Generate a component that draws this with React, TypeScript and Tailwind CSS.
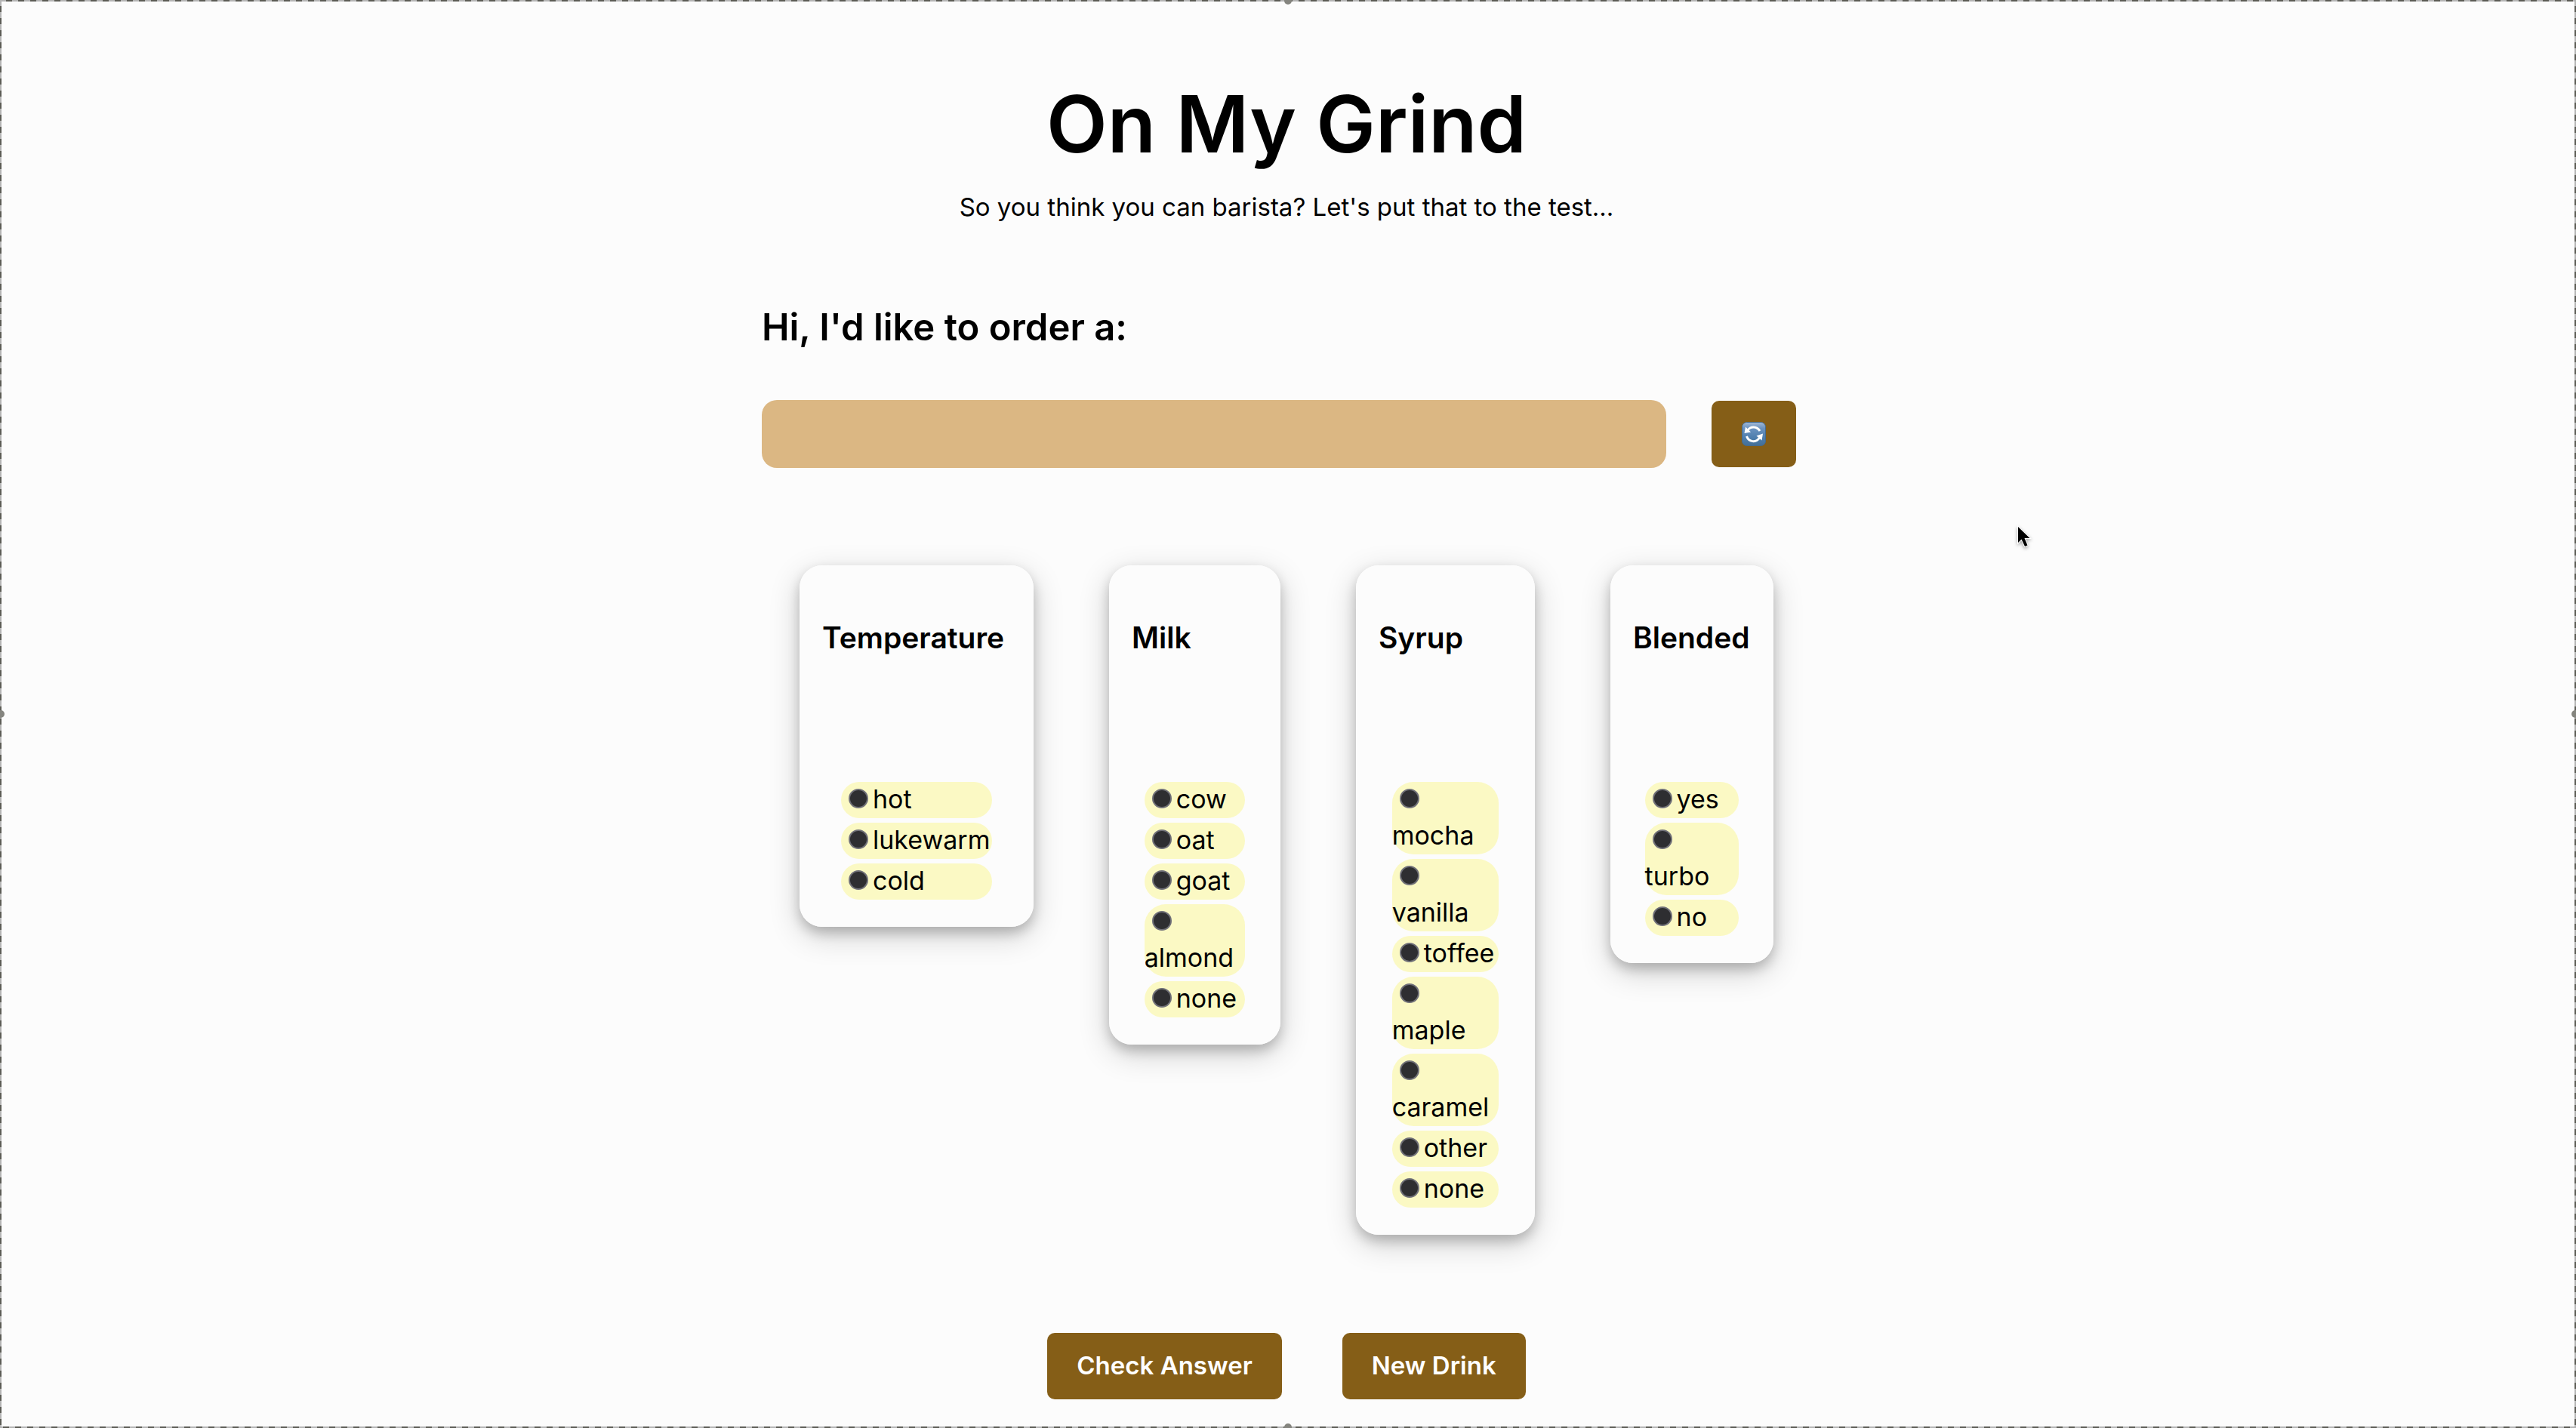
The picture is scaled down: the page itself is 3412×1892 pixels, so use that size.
import React from "react";

type Option = { name: string; stacked?: boolean };
type Group = { title: string; width: string; options: Option[] };

const groups: Group[] = [
  {
    title: "Temperature",
    width: "w-[310px]",
    options: [{ name: "hot" }, { name: "lukewarm" }, { name: "cold" }],
  },
  {
    title: "Milk",
    width: "w-[227px]",
    options: [
      { name: "cow" },
      { name: "oat" },
      { name: "goat" },
      { name: "almond", stacked: true },
      { name: "none" },
    ],
  },
  {
    title: "Syrup",
    width: "w-[237px]",
    options: [
      { name: "mocha", stacked: true },
      { name: "vanilla", stacked: true },
      { name: "toffee" },
      { name: "maple", stacked: true },
      { name: "caramel", stacked: true },
      { name: "other" },
      { name: "none" },
    ],
  },
  {
    title: "Blended",
    width: "w-[216px]",
    options: [{ name: "yes" }, { name: "turbo", stacked: true }, { name: "no" }],
  },
];

const buttonClass =
  "h-[88px] rounded-[10px] bg-[#855e17] px-[39px] text-[33px] font-semibold text-white whitespace-nowrap";

function OptionRow({ group, option }: { group: string; option: Option }) {
  const id = `${group}-${option.name}`;
  return (
    <div
      className={
        option.stacked
          ? "flex flex-col rounded-[28px] bg-[#fbf9c4]"
          : "flex flex-row rounded-[28px] bg-[#fbf9c4]"
      }
    >
      <span className="flex h-12 shrink-0 items-center pb-1">
        <input
          type="radio"
          id={id}
          name={group}
          value={option.name}
          className="ml-[10px] mr-[6px] size-[26px] appearance-none rounded-full border-2 border-[#707078] bg-[#2e2e31]"
        />
      </span>
      <label htmlFor={id} className="h-12 text-[34px] leading-[46px] whitespace-nowrap">
        {option.name}
      </label>
    </div>
  );
}

function Card({ group }: { group: Group }) {
  return (
    <fieldset
      className={`${group.width} min-w-0 rounded-[30px] bg-[#fcfcfc] px-[30px] pt-[68px] pb-9 shadow-[0_8px_16px_0_rgba(0,0,0,0.2),0_12px_40px_0_rgba(0,0,0,0.19)]`}
    >
      <h3 className="text-[39px] leading-[56px] font-semibold whitespace-nowrap">
        {group.title}
      </h3>
      <div className="mx-auto mt-[163px] flex w-4/5 flex-col gap-[6px]">
        {group.options.map((o) => (
          <OptionRow key={o.name} group={group.title} option={o} />
        ))}
      </div>
    </fieldset>
  );
}

function RefreshIcon() {
  return (
    <svg viewBox="0 0 32 32" className="size-8" aria-hidden="true">
      <defs>
        <linearGradient id="tile" x1="0" y1="0" x2="0" y2="1">
          <stop offset="0" stopColor="#a3b9d6" />
          <stop offset="0.25" stopColor="#6b93c0" />
          <stop offset="0.7" stopColor="#4c7cab" />
          <stop offset="1" stopColor="#446f95" />
        </linearGradient>
      </defs>
      <rect x="0.5" y="0.5" width="31" height="31" rx="6" fill="url(#tile)" stroke="#456a8c" />
      <g fill="none" stroke="#fff" strokeWidth="3">
        <path d="M8 11C11.500 5.500 20 5.500 24 12" />
        <path d="M6.500 19C9.500 27 19 28 23.500 21" />
      </g>
      <path d="M3.500 15l1.500-8.500 7 7z" fill="#fff" />
      <path d="M28 15.500l-1.500 9-7-6z" fill="#fff" />
    </svg>
  );
}

function Handle({ className }: { className: string }) {
  return <span className={`absolute size-[10px] rounded-full bg-[#85857f] ${className}`} />;
}

export default function App() {
  return (
    <div className="relative min-h-screen overflow-hidden bg-[#fcfcfc] pr-1 font-['Inter',sans-serif] text-black">
      <main className="mx-auto flex max-w-[1390px] flex-col">
        <h1 className="mt-[92px] text-center text-[105px] leading-[144px] font-semibold">
          On My Grind
        </h1>
        <p className="mt-[14px] text-center text-[33px] leading-[48px]">
          So you think you can barista? Let's put that to the test...
        </p>
        <h2 className="mt-[100px] text-[49px] leading-[72px] font-semibold">
          <label htmlFor="order">Hi, I'd like to order a:</label>
        </h2>
        <div className="mt-[60px] flex items-center gap-[60px] pr-5">
          <input
            id="order"
            readOnly
            className="h-[90px] min-w-0 flex-1 rounded-[20px] bg-[#dbb783] px-6 text-[34px]"
          />
          <button
            aria-label="Get another order"
            className="flex h-[88px] w-[112px] items-center justify-center rounded-[10px] bg-[#855e17]"
          >
            <RefreshIcon />
          </button>
        </div>
        <div className="mt-[129px] flex items-start justify-between px-[50px]">
          {groups.map((g) => (
            <Card key={g.title} group={g} />
          ))}
        </div>
        <div className="mt-[130px] flex justify-center gap-20 pb-9">
          <button className={buttonClass}>Check Answer</button>
          <button className={buttonClass}>New Drink</button>
        </div>
      </main>

      <svg
        viewBox="0 0 22 34"
        className="pointer-events-none absolute top-[695px] left-[2669px] h-[34px] w-[24px] drop-shadow-[0_2px_2px_rgba(0,0,0,0.35)]"
        aria-hidden="true"
      >
        <path
          d="M3 3v21l4.500-4.500 4.500 9.500 3.500-1.600-4-9.400h7z"
          fill="#000"
          stroke="#fff"
          strokeWidth="2"
          paintOrder="stroke"
        />
      </svg>

      <div className="pointer-events-none absolute inset-0">
        <div className="absolute inset-x-0 top-0 h-[2px] bg-[repeating-linear-gradient(90deg,#b5b5b5_0_8px,#5c5c55_8px_16px)]" />
        <div className="absolute inset-x-0 bottom-0 h-[2px] bg-[repeating-linear-gradient(90deg,#b5b5b5_0_4px,#5c5c55_4px_12px,#b5b5b5_12px_16px)]" />
        <div className="absolute inset-y-0 left-0 w-[2px] bg-[repeating-linear-gradient(180deg,#b5b5b5_0_8px,#5c5c55_8px_16px)]" />
        <div className="absolute inset-y-0 right-0 w-[2px] bg-[repeating-linear-gradient(180deg,#b5b5b5_0_8px,#5c5c55_8px_16px)]" />
        <Handle className="-top-1 left-1/2 -translate-x-1/2" />
        <Handle className="-bottom-1 left-1/2 -translate-x-1/2" />
        <Handle className="top-1/2 -left-1 -translate-y-1/2" />
        <Handle className="top-1/2 -right-1 -translate-y-1/2" />
      </div>
    </div>
  );
}
